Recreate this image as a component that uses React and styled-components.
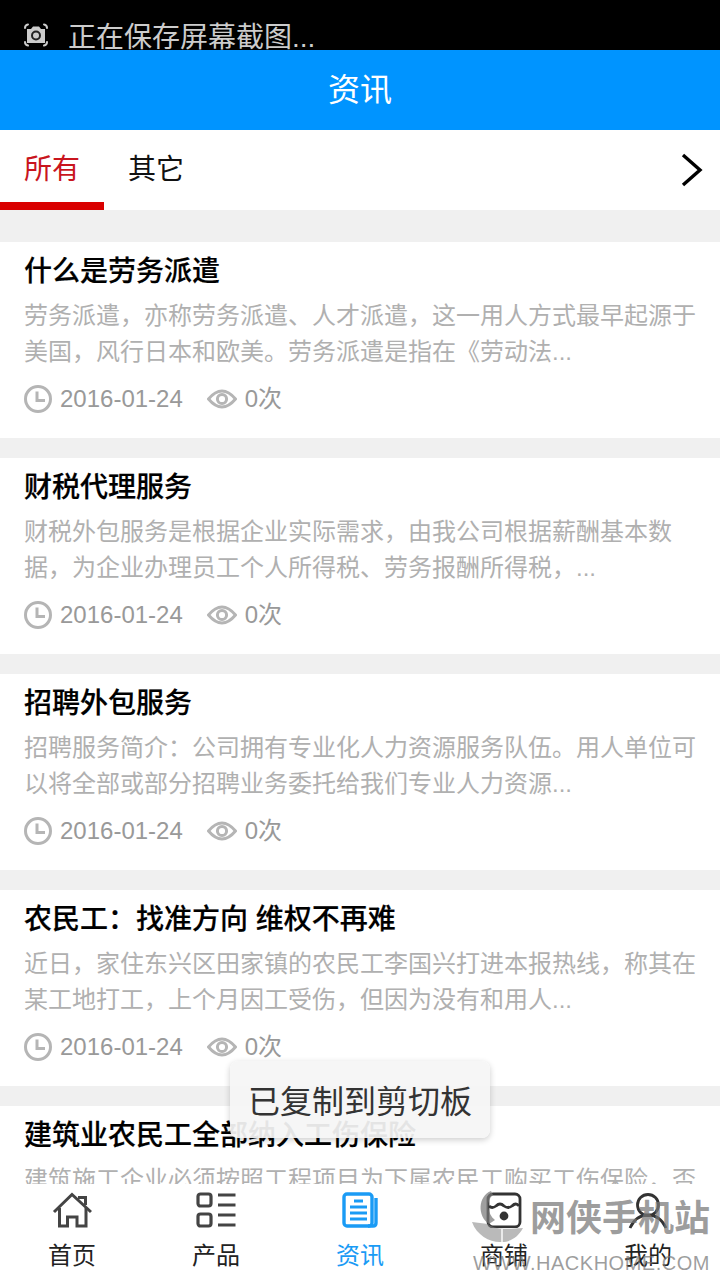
import React from 'react';
import styled, { createGlobalStyle } from 'styled-components';

const Global = createGlobalStyle`
    html, body {
        margin: 0;
        padding: 0;
        background: #f0f0f0;
    }
    * {
        box-sizing: border-box;
    }
`;

const Page = styled.div`
    position: relative;
    width: 720px;
    height: 1280px;
    display: flex;
    flex-direction: column;
    overflow: hidden;
    font-family: "Liberation Sans", "Noto Sans CJK SC", sans-serif;
    background: #f0f0f0;
`;

const StatusBar = styled.div`
    height: 50px;
    flex-shrink: 0;
    background: #000;
    display: flex;
    padding: 24px 0 0 24px;
    gap: 20px;
    overflow: hidden;
`;

const StatusIcon = styled.svg`
    margin-top: -1px;
    flex-shrink: 0;
`;

const StatusText = styled.div`
    color: #ccc;
    font-size: 28px;
    line-height: 28px;
    white-space: nowrap;
`;

const Header = styled.header`
    height: 80px;
    flex-shrink: 0;
    padding-bottom: 6px;
    background: #0094ff;
    color: #fff;
    font-size: 32px;
    display: flex;
    align-items: center;
    justify-content: center;
`;

const Tabs = styled.nav`
    height: 80px;
    flex-shrink: 0;
    background: #fff;
    display: flex;
`;

const Tab = styled.div`
    width: 104px;
    height: 80px;
    font-size: 28px;
    line-height: 80px;
    text-align: center;
    color: ${(p) => (p.$active ? '#c9151e' : '#111')};
    border-bottom: 8px solid ${(p) => (p.$active ? '#d90000' : 'transparent')};
`;

const More = styled.div`
    margin-left: auto;
    width: 56px;
    display: flex;
    align-items: center;
    justify-content: center;
`;

const List = styled.main`
    flex: 1;
    min-height: 0;
    overflow: hidden;
    padding-top: 32px;
`;

const Card = styled.article`
    height: 196px;
    margin-bottom: 20px;
    padding: 10px 24px 0;
    background: #fff;
`;

const Title = styled.h3`
    margin: 0;
    font-size: 28px;
    line-height: 40px;
    font-weight: 500;
    color: #000;
    -webkit-text-stroke: 0.2px #000;
`;

const Summary = styled.p`
    margin: 6px 0 0;
    font-size: 24px;
    line-height: 36px;
    color: #b0b0b0;
`;

const Meta = styled.div`
    margin-top: 11px;
    height: 36px;
    display: flex;
    align-items: center;
    font-size: 24px;
    color: #999;
`;

const MetaText = styled.span`
    margin-left: 8px;
    height: 36px;
    line-height: 36px;
`;

const EyeWrap = styled.span`
    margin-left: 24px;
    display: flex;
`;

const TabBar = styled.footer`
    height: 96px;
    flex-shrink: 0;
    background: #fff;
    display: flex;
`;

const TabItem = styled.div`
    width: 144px;
    padding-top: 8px;
    display: flex;
    flex-direction: column;
    align-items: center;
    font-size: 24px;
    line-height: 32px;
    color: ${(p) => (p.$active ? '#1a9bf5' : '#222')};
`;

const IconBox = styled.div`
    height: 38px;
    margin-bottom: 10px;
    display: flex;
    align-items: flex-start;
    justify-content: center;
`;

const Toast = styled.div`
    position: absolute;
    left: 230px;
    top: 1061px;
    width: 260px;
    height: 77px;
    padding-bottom: 2px;
    border-radius: 8px;
    background: rgba(245, 245, 245, 0.93);
    box-shadow: 0 2px 6px rgba(0, 0, 0, 0.2);
    color: #333;
    font-size: 32px;
    display: flex;
    align-items: center;
    justify-content: center;
`;

const Watermark = styled.div`
    position: absolute;
    left: 469px;
    top: 1186px;
    width: 251px;
    height: 94px;
    pointer-events: none;
    color: rgba(120, 120, 120, 0.72);
`;

const MarkLogo = styled.svg`
    position: absolute;
    left: 0;
    top: 0;
`;

const MarkName = styled.div`
    position: absolute;
    left: 61px;
    top: 8px;
    font-size: 36px;
    line-height: 50px;
    font-weight: 700;
    white-space: nowrap;
`;

const MarkUrl = styled.div`
    position: absolute;
    left: 4px;
    top: 64px;
    font-size: 20px;
    line-height: 26px;
    letter-spacing: 0.5px;
    white-space: nowrap;
`;

const articles = [
    {
        title: '什么是劳务派遣',
        text: '劳务派遣，亦称劳务派遣、人才派遣，这一用人方式最早起源于美国，风行日本和欧美。劳务派遣是指在《劳动法...',
    },
    {
        title: '财税代理服务',
        text: '财税外包服务是根据企业实际需求，由我公司根据薪酬基本数据，为企业办理员工个人所得税、劳务报酬所得税，...',
    },
    {
        title: '招聘外包服务',
        text: '招聘服务简介：公司拥有专业化人力资源服务队伍。用人单位可以将全部或部分招聘业务委托给我们专业人力资源...',
    },
    {
        title: '农民工：找准方向 维权不再难',
        text: '近日，家住东兴区田家镇的农民工李国兴打进本报热线，称其在某工地打工，上个月因工受伤，但因为没有和用人...',
    },
    {
        title: '建筑业农民工全部纳入工伤保险',
        text: '建筑施工企业必须按照工程项目为下属农民工购买工伤保险，否则将承担相应责任和后果，按项目参保的规定...',
    },
];

const ScreenshotIcon = () => (
    <StatusIcon width="24" height="24" viewBox="0 0 24 24" fill="none" stroke="#ccc" strokeWidth="2" strokeLinecap="round">
        <path d="M1 5Q1 2 4 1.5M20 1.5Q23 2 23 5M1 19Q1 22 4 22.5M20 22.5Q23 22 23 19" />
        <path d="M3 6H7L9 3.5H15L17 6H21V20H3Z" fill="#ccc" stroke="none" />
        <circle cx="12" cy="12.5" r="4" fill="#ccc" stroke="#222" strokeWidth="2" />
    </StatusIcon>
);

const Chevron = () => (
    <svg width="24" height="34" viewBox="0 0 24 34" fill="none" stroke="#000" strokeWidth="3.4">
        <path d="M3 2L20 17L3 32" />
    </svg>
);

const Clock = () => (
    <svg width="28" height="28" viewBox="0 0 28 28" fill="none" stroke="#b5b5b5" strokeWidth="3">
        <circle cx="14" cy="14" r="12.5" />
        <path d="M13 6.5V15.5H21" />
    </svg>
);

const Eye = () => (
    <svg width="30" height="22" viewBox="0 0 30 22" fill="none" stroke="#b5b5b5" strokeWidth="3">
        <path d="M1.5 11Q15 -5 28.5 11Q15 27 1.5 11Z" />
        <circle cx="15" cy="11" r="4.6" />
    </svg>
);

const HomeIcon = () => (
    <svg width="40" height="36" viewBox="0 0 40 36" fill="none" stroke="#444" strokeWidth="3">
        <path d="M2 20L20 2.5L39 20" />
        <path d="M26 5.5H33.5V13" />
        <path d="M7.5 16V34H15.5V25H25V34H34V16" />
    </svg>
);

const ProductIcon = () => (
    <svg width="40" height="36" viewBox="0 0 40 36" fill="none" stroke="#444" strokeWidth="3.2">
        <rect x="2" y="2" width="13" height="12" rx="2.5" />
        <rect x="2" y="22" width="13" height="12" rx="2.5" />
        <path d="M22 3H39.5M22 13H39.5M22 23H39.5M22 33H39.5" />
    </svg>
);

const NewsIcon = () => (
    <svg width="36" height="36" viewBox="0 0 36 36" fill="none" stroke="#1a9bf5" strokeWidth="3.4">
        <rect x="2" y="2" width="28" height="32" rx="3" />
        <path d="M34 6V31Q34 34 31 34H26" />
        <path d="M12 9H21M8 15H25M8 21H25M8 27H25" strokeWidth="3" />
    </svg>
);

const ShopIcon = () => (
    <svg width="36" height="36" viewBox="0 0 36 36" fill="none" stroke="#333" strokeWidth="2.8">
        <rect x="2" y="2" width="32" height="33" rx="5" />
        <path d="M3 14Q6 17 10 14Q14 10 18 14Q22 17 26 14Q30 10 33 14" />
        <circle cx="18" cy="24" r="4.4" fill="#333" stroke="none" />
    </svg>
);

const UserIcon = () => (
    <svg width="40" height="38" viewBox="0 0 40 38" fill="none" stroke="#333" strokeWidth="2.8">
        <circle cx="20" cy="13" r="10.5" />
        <path d="M2 36Q8 23 20 23Q32 23 38 36" />
    </svg>
);

const navItems = [
    { label: '首页', icon: <HomeIcon /> },
    { label: '产品', icon: <ProductIcon /> },
    { label: '资讯', icon: <NewsIcon />, active: true },
    { label: '商铺', icon: <ShopIcon /> },
    { label: '我的', icon: <UserIcon /> },
];

const App = () => {
    return (
        <Page>
            <Global />
            <StatusBar>
                <ScreenshotIcon />
                <StatusText>正在保存屏幕截图...</StatusText>
            </StatusBar>
            <Header>资讯</Header>
            <Tabs>
                <Tab $active>所有</Tab>
                <Tab>其它</Tab>
                <More>
                    <Chevron />
                </More>
            </Tabs>
            <List>
                {articles.map((item) => (
                    <Card key={item.title}>
                        <Title>{item.title}</Title>
                        <Summary>{item.text}</Summary>
                        <Meta>
                            <Clock />
                            <MetaText>2016-01-24</MetaText>
                            <EyeWrap>
                                <Eye />
                            </EyeWrap>
                            <MetaText>0次</MetaText>
                        </Meta>
                    </Card>
                ))}
            </List>
            <TabBar>
                {navItems.map((item) => (
                    <TabItem key={item.label} $active={item.active}>
                        <IconBox>{item.icon}</IconBox>
                        {item.label}
                    </TabItem>
                ))}
            </TabBar>
            <Toast>已复制到剪切板</Toast>
            <Watermark>
                <MarkLogo width="58" height="60" viewBox="0 0 58 60">
                    <path d="M22 5C9 10 8 30 20 38L26 34C18 28 17 14 24 9Z" fill="rgba(120,120,120,0.72)" />
                    <path d="M3 36L19 38C24 42 30 44 54 42C50 50 42 56 33 56C22 57 8 50 3 36Z" fill="rgba(130,130,130,0.55)" />
                    <path d="M33 43V57" stroke="#fff" strokeWidth="1.4" />
                </MarkLogo>
                <MarkName>网侠手机站</MarkName>
                <MarkUrl>WWW.HACKHOME.COM</MarkUrl>
            </Watermark>
        </Page>
    );
};

export default App;
